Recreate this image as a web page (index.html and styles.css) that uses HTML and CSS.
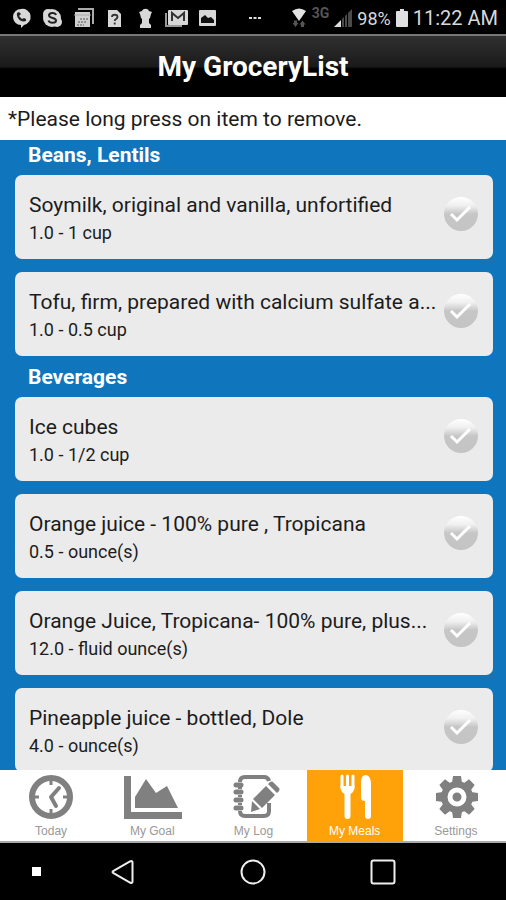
FILE: index.html
```html
<!DOCTYPE html>
<html lang="en">
<head>
    <meta charset="UTF-8">
    <meta name="viewport" content="width=device-width, initial-scale=1.0">
    <title>My GroceryList</title>
    <link rel="stylesheet" href="styles.css">
</head>
<body>
    <div class="status-bar">
        <div class="notifications">
            <svg viewBox="0 0 25 25"><path d="M12 4a8 8 0 0 1 3 16L12 23v-3A8 8 0 0 1 12 4z" fill="#d8d8d8"/><path d="M8 8c-1 5 4 10 9 8l0-2-2-1-2 1-3-3L12 9l-2-2z" fill="#222"/></svg>
            <svg viewBox="0 0 25 25"><circle cx="12" cy="13" r="9" fill="#d8d8d8"/><circle cx="8" cy="9" r="5" fill="#d8d8d8"/><circle cx="17" cy="17" r="5" fill="#d8d8d8"/><path d="M16 10c-1-3-7-2.500-7 .3 0 3.500 7 2 7 5.200 0 3-6.500 3-7.500 0" fill="none" stroke="#222" stroke-width="2"/></svg>
            <svg viewBox="0 0 25 25"><path d="M7 4h15v15" fill="none" stroke="#aaa" stroke-width="2"/><path d="M4 7h15v15H4z" fill="#d0d0d0"/><path d="M3 10h17" stroke="#aaa"/><path d="M9 14h8M7 17h9M6 20h7" stroke="#555" stroke-width="1" stroke-dasharray="2 1"/></svg>
            <svg viewBox="0 0 25 25"><path d="M6 5h9l4 4v13H6z" fill="#d8d8d8"/><path d="M10 12c0-3 5.500-3 5.500 0 0 2-2.800 2-2.800 4M12.700 17.500v2" fill="none" stroke="#333" stroke-width="1.800"/></svg>
            <svg viewBox="0 0 25 25"><path d="M7 9l-1-2 3-1c1-3 6-3 7 0l3 1-1 2-1 4-1 1v4l2 2v3H7v-3l2-2v-4l-1-1z" fill="#d8d8d8"/></svg>
            <svg viewBox="0 0 25 25"><path d="M3 8H1v14h17v-2H3z" fill="#999"/><rect x="4" y="5" width="20" height="15" rx="1" fill="#d8d8d8"/><path d="M8 16V8l6 5 6-5v8" fill="none" stroke="#333" stroke-width="2"/></svg>
            <svg viewBox="0 0 25 25"><rect x="4" y="5" width="17" height="16" rx="1" fill="#d8d8d8"/><path d="M6 18v-5l4-3 3 3 3-1 3 3v3z" fill="#111"/></svg>
        </div>
        <svg class="more" viewBox="0 0 12 4"><path d="M0 1h3v2H0zM4.500 1h3v2h-3zM9 1h3v2H9z" fill="#ddd"/></svg>
        <div class="system">
            <svg class="wifi" viewBox="0 0 16 20"><path d="M1 3q7-5 14 0l-7 10z" fill="#e4e4e4"/><path d="M4.500 19l-3-4h1.500v-2.500h3V15h1.500zM11.500 12.500l3 4H13V19h-3v-2.500H8.500z" fill="#555"/></svg>
            <span class="network">3G</span>
            <svg class="signal" viewBox="0 0 18 18"><path d="M0 18L7 11v7z" fill="#ddd"/><path d="M8 18v-8l2-2v10zM11 18V7l2-2v13zM14 18V4l4-4v18z" fill="#4a4a4a"/></svg>
            <span>98%</span>
            <svg class="battery" viewBox="0 0 12 18"><path d="M4 0h4v2h3q1 0 1 1v14q0 1-1 1H1q-1 0-1-1V3q0-1 1-1h3z" fill="#e0e0e0"/></svg>
            <span class="clock">11:22 AM</span>
        </div>
    </div>

    <header class="title-bar">
        <h1>My GroceryList</h1>
    </header>
    <p class="hint">*Please long press on item to remove.</p>

    <main class="grocery-list">
        <section>
            <h2>Beans, Lentils</h2>
            <div class="card">
                <div class="item">
                    <h3>Soymilk, original and vanilla, unfortified</h3>
                    <p>1.0 - 1 cup</p>
                </div>
                <label class="check">
                    <input type="checkbox" aria-label="Soymilk, original and vanilla, unfortified">
                    <svg viewBox="0 0 34 34"><path d="M7 17l6 6 13-13"/></svg>
                </label>
            </div>
            <div class="card">
                <div class="item">
                    <h3>Tofu, firm, prepared with calcium sulfate a...</h3>
                    <p>1.0 - 0.5 cup</p>
                </div>
                <label class="check">
                    <input type="checkbox" aria-label="Tofu, firm">
                    <svg viewBox="0 0 34 34"><path d="M7 17l6 6 13-13"/></svg>
                </label>
            </div>
        </section>
        <section>
            <h2>Beverages</h2>
            <div class="card">
                <div class="item">
                    <h3>Ice cubes</h3>
                    <p>1.0 - 1/2 cup</p>
                </div>
                <label class="check">
                    <input type="checkbox" aria-label="Ice cubes">
                    <svg viewBox="0 0 34 34"><path d="M7 17l6 6 13-13"/></svg>
                </label>
            </div>
            <div class="card">
                <div class="item">
                    <h3>Orange juice - 100% pure , Tropicana</h3>
                    <p>0.5 - ounce(s)</p>
                </div>
                <label class="check">
                    <input type="checkbox" aria-label="Orange juice - 100% pure, Tropicana">
                    <svg viewBox="0 0 34 34"><path d="M7 17l6 6 13-13"/></svg>
                </label>
            </div>
            <div class="card">
                <div class="item">
                    <h3>Orange Juice, Tropicana- 100% pure, plus...</h3>
                    <p>12.0 - fluid ounce(s)</p>
                </div>
                <label class="check">
                    <input type="checkbox" aria-label="Orange Juice, Tropicana">
                    <svg viewBox="0 0 34 34"><path d="M7 17l6 6 13-13"/></svg>
                </label>
            </div>
            <div class="card">
                <div class="item">
                    <h3>Pineapple juice - bottled, Dole</h3>
                    <p>4.0 - ounce(s)</p>
                </div>
                <label class="check">
                    <input type="checkbox" aria-label="Pineapple juice - bottled, Dole">
                    <svg viewBox="0 0 34 34"><path d="M7 17l6 6 13-13"/></svg>
                </label>
            </div>
        </section>
    </main>

    <nav class="tabs">
        <a href="#today">
            <svg viewBox="0 0 60 48"><circle cx="30" cy="24" r="19" fill="none" stroke="#808080" stroke-width="6"/><path d="M38 15l-8 9 5 9" fill="none" stroke="#808080" stroke-width="4" stroke-linejoin="round" stroke-linecap="round"/><path d="M30 8v4M30 36v4M14 24h4M42 24h4" stroke="#808080" stroke-width="3"/></svg>
            Today
        </a>
        <a href="#goal">
            <svg viewBox="0 0 60 48"><path d="M2 3h7v36h51v7H2z" fill="#808080"/><path d="M13 35V24L24 6l10 14 11-7 11 22z" fill="#808080"/></svg>
            My Goal
        </a>
        <a href="#log">
            <svg viewBox="0 0 60 48"><path d="M17 9q0-5 5-5h19q4 0 5 4M46 30v8q0 5-5 5H22q-5 0-5-5M17 14v2M17 22v2M17 30v2" fill="none" stroke="#808080" stroke-width="4"/><path d="M13 12h5M13 19h5M13 27h5M13 35h5" stroke="#808080" stroke-width="5" stroke-linecap="round"/><path d="M43 13l9 9-13 13-9-9zM29 28l8 8-9 3zM45 11l2-2q2-1 3 0l6 6q1 1 0 3l-2 2z" fill="#808080"/></svg>
            My Log
        </a>
        <a href="#meals" class="active">
            <svg viewBox="0 0 60 48"><path d="M17 3v12M22.500 3v12M28 3v12" stroke="#fff" stroke-width="3" stroke-linecap="round"/><path d="M15.500 13h14q0 6-4 8v22q0 3-3 3t-3-3V21q-4-2-4-8zM36 25V9q0-7 5-7 5 1 5 9v32q0 3-3 3t-3-3V28q-4 0-4-3z" fill="#fff"/></svg>
            My Meals
        </a>
        <a href="#settings">
            <svg viewBox="0 0 60 48"><g fill="#808080"><circle cx="31" cy="24" r="16"/><path id="tooth" d="M26 10l1-7h8l1 7zM26 38l1 7h8l1-7z"/><use href="#tooth" transform="rotate(45 31 24)"/><use href="#tooth" transform="rotate(90 31 24)"/><use href="#tooth" transform="rotate(135 31 24)"/></g><circle cx="31" cy="24" r="7" fill="#808080" stroke="#fff" stroke-width="5"/></svg>
            Settings
        </a>
    </nav>

    <div class="nav-bar">
        <button class="dot" aria-label="Hide bar"></button>
        <button aria-label="Back"><svg viewBox="0 0 28 28"><path d="M4.500 12.800L21 3.500q2.500-1.200 2.500 1v19q0 2.200-2.500 1L4.500 15.200q-2-1.200 0-2.400z"/></svg></button>
        <button aria-label="Home"><svg viewBox="0 0 28 28"><circle cx="14" cy="14" r="11.500"/></svg></button>
        <button aria-label="Recent apps"><svg viewBox="0 0 28 28"><rect x="2.500" y="2.500" width="23" height="23" rx="2"/></svg></button>
    </div>
</body>
</html>
```

FILE: styles.css
```css
* {
    box-sizing: border-box;
}
body {
    font-family: Roboto, "Liberation Sans", sans-serif;
    margin: 0;
    height: 100vh;
    display: flex;
    flex-direction: column;
    background-color: #000;
    color: #1c1c1c;
}
h1, h2, h3, p {
    margin: 0;
}
svg {
    display: block;
}

.status-bar {
    flex: none;
    height: 34px;
    padding: 2px 8px 0 9px;
    display: flex;
    align-items: center;
    justify-content: space-between;
    color: #d8d8d8;
    font-size: 18px;
}
.notifications {
    display: flex;
    gap: 6px;
    padding-bottom: 2px;
}
.notifications svg {
    width: 25px;
    height: 25px;
}
.more {
    width: 12px;
    height: 4px;
}
.system {
    display: flex;
    align-items: center;
    gap: 5px;
}
.wifi {
    width: 16px;
    height: 20px;
}
.network {
    color: #555;
    font-size: 14px;
    font-weight: bold;
    padding-bottom: 10px;
}
.signal {
    width: 18px;
    height: 18px;
}
.battery {
    width: 12px;
    height: 18px;
}
.clock {
    font-size: 20px;
}

.title-bar {
    flex: none;
    height: 63px;
    border-top: 2px solid #777;
    background: linear-gradient(#303030, #1a1a1a 50%, #000 54%);
    display: flex;
    align-items: center;
    justify-content: center;
}
.title-bar h1 {
    color: #fff;
    font-size: 28px;
    line-height: 32px;
}
.hint {
    flex: none;
    background-color: #fff;
    font-size: 21px;
    line-height: 42px;
    padding: 1px 8px 0;
}

.grocery-list {
    flex: 1;
    min-height: 0;
    overflow: hidden;
    background-color: #0f75bc;
    padding: 0 13px 0 15px;
}
.grocery-list section {
    padding-bottom: 6px;
}
.grocery-list h2 {
    color: #fff;
    font-size: 21px;
    line-height: 24px;
    padding: 3px 13px 8px;
}
.card {
    height: 84px;
    background-color: #ebebeb;
    border-radius: 7px;
    padding: 0 15px 0 14px;
    display: flex;
    justify-content: space-between;
}
.card + .card {
    margin-top: 13px;
}
.item {
    min-width: 0;
    padding-top: 15px;
    white-space: nowrap;
}
.item h3 {
    font-size: 21px;
    font-weight: normal;
    line-height: 30px;
}
.item p {
    font-size: 18px;
    line-height: 26px;
}
.check {
    flex: none;
    display: grid;
    align-self: flex-start;
    margin-top: 22px;
}
.check input,
.check svg {
    grid-area: 1 / 1;
    width: 34px;
    height: 34px;
    margin: 0;
}
.check input {
    appearance: none;
    border-radius: 50%;
    background: linear-gradient(#fff, #f0f0f0 25%, #c6c6c6 50%, #c4c4c4);
}
.check svg {
    fill: none;
    stroke: #fff;
    stroke-width: 3;
    pointer-events: none;
}

.tabs {
    flex: none;
    height: 73px;
    background-color: #fff;
    border-bottom: 2px solid #aaa;
    display: grid;
    grid-template-columns: repeat(5, 1fr);
}
.tabs a {
    margin: 0 2px 0 3px;
    padding-top: 3px;
    display: flex;
    flex-direction: column;
    align-items: center;
    gap: 2px;
    color: #999;
    font-family: "Liberation Sans", Arial, sans-serif;
    font-size: 12px;
    line-height: 16px;
    text-decoration: none;
}
.tabs svg {
    width: 60px;
    height: 48px;
}
.tabs .active {
    background-color: #ffa20a;
    color: #fff;
}

.nav-bar {
    flex: none;
    height: 57px;
    display: grid;
    grid-template-columns: 58px 1fr 1fr 1fr 58px;
    align-items: center;
    justify-items: center;
}
.nav-bar button {
    background: none;
    border: none;
    padding: 0;
}
.nav-bar svg {
    width: 28px;
    height: 28px;
    fill: none;
    stroke: #eee;
    stroke-width: 2;
}
.nav-bar .dot {
    width: 9px;
    height: 9px;
    background-color: #fff;
    justify-self: end;
    margin-right: 17px;
}
```
